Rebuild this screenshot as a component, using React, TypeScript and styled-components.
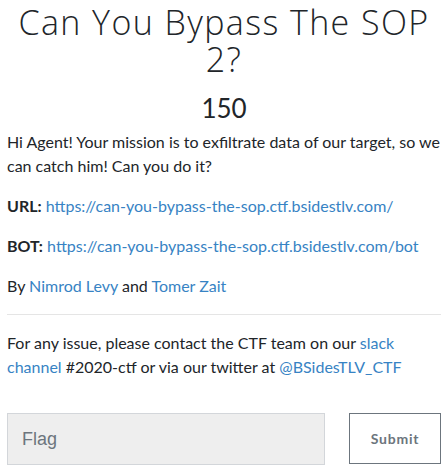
import styled, { createGlobalStyle } from "styled-components";

const GlobalStyle = createGlobalStyle`
  body {
    margin: 0;
    background: #fff;
    font-family: Lato, "Open Sans", sans-serif;
    color: #212529;
  }
`;

const Page = styled.div`
  box-sizing: border-box;
  width: 446px;
  padding: 0 5px 0 7px;
`;

const Title = styled.h1`
  margin: 0;
  padding: 4px 8px 0;
  font-family: "Open Sans", sans-serif;
  font-weight: 300;
  font-size: 34px;
  line-height: 37px;
  letter-spacing: 1.4px;
  text-align: center;
  color: #212529;
`;

const Value = styled.h3`
  margin: 13px 0 5px;
  font-family: Lato, sans-serif;
  font-weight: 400;
  font-size: 26px;
  line-height: 34px;
  text-align: center;
`;

const Para = styled.p`
  margin: 0 0 16px;
  font-size: 16px;
  line-height: 24px;
`;

const Link = styled.a`
  color: #3783c4;
  text-decoration: none;
`;

const Rule = styled.hr`
  margin: 0 0 16px;
  border: 0;
  border-top: 1px solid #e5e5e5;
`;

const FlagRow = styled.form`
  display: flex;
  align-items: flex-start;
  gap: 24px;
  margin-top: 34px;
`;

const FlagInput = styled.input`
  box-sizing: border-box;
  width: 318px;
  height: 52px;
  padding: 0 14px;
  background: #eeeeee;
  border: 1px solid #d3d6da;
  border-radius: 0;
  font-family: "Liberation Sans", Arial, sans-serif;
  font-size: 18px;
  color: #495057;
  &::placeholder {
    color: #6c757d;
  }
`;

const SubmitButton = styled.button`
  box-sizing: border-box;
  width: 92px;
  height: 51px;
  background: #fff;
  border: 1px solid #6c757d;
  border-radius: 0;
  font-family: Lato, sans-serif;
  font-weight: 700;
  font-size: 14px;
  letter-spacing: 0.8px;
  color: #6c757d;
`;

export default function App() {
  return (
    <Page>
      <GlobalStyle />
      <Title>Can You Bypass The SOP 2?</Title>
      <Value>150</Value>
      <Para>
        Hi Agent! Your mission is to exfiltrate data of our target, so we can
        catch him! Can you do it?
      </Para>
      <Para>
        <b>URL:</b>{" "}
        <Link href="#">https://can-you-bypass-the-sop.ctf.bsidestlv.com/</Link>
      </Para>
      <Para>
        <b>BOT:</b>{" "}
        <Link href="#">https://can-you-bypass-the-sop.ctf.bsidestlv.com/bot</Link>
      </Para>
      <Para>
        By <Link href="#">Nimrod Levy</Link> and <Link href="#">Tomer Zait</Link>
      </Para>
      <Rule />
      <Para>
        For any issue, please contact the CTF team on our{" "}
        <Link href="#">slack channel</Link> #2020-ctf or via our twitter at{" "}
        <Link href="#">@BSidesTLV_CTF</Link>
      </Para>
      <FlagRow onSubmit={(e) => e.preventDefault()}>
        <FlagInput placeholder="Flag" />
        <SubmitButton type="submit">Submit</SubmitButton>
      </FlagRow>
    </Page>
  );
}
